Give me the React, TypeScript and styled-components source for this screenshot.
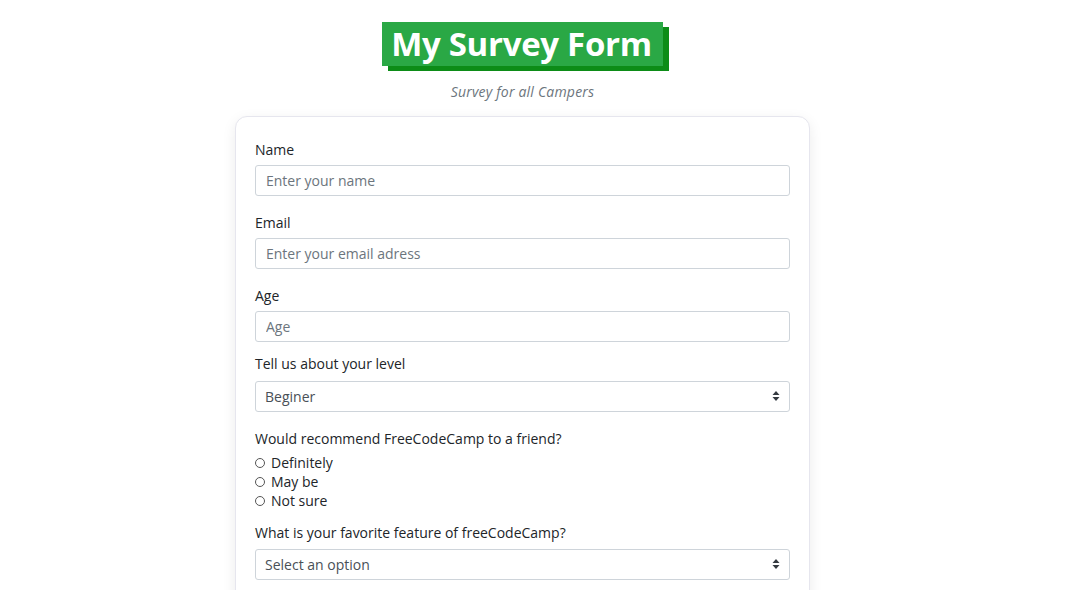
import React from "react";
import styled, { createGlobalStyle } from "styled-components";

const Global = createGlobalStyle`
  html, body { margin: 0; padding: 0; background: #ffffff; }
  body { font-family: "Open Sans", "DejaVu Sans", sans-serif; color: #212529; }
  * { box-sizing: border-box; }
`;

const Page = styled.div`
  width: 1045px;
  display: flex;
  flex-direction: column;
  align-items: center;
  padding-top: 22px;
`;

const Title = styled.h1`
  margin: 0;
  background: #2aa845;
  color: #ffffff;
  font-family: "Open Sans", sans-serif;
  font-weight: 700;
  font-size: 33px;
  line-height: 44px;
  height: 44px;
  padding: 0 11px 0 9px;
  box-shadow: 6px 5px 0 #0c8c17;
  letter-spacing: -0.3px;
`;

const Subtitle = styled.p`
  margin: 17px 0 0;
  font-style: italic;
  font-size: 14px;
  line-height: 18px;
  color: #6c757d;
  letter-spacing: 0.2px;
`;

const Card = styled.form`
  margin-top: 15px;
  width: 575px;
  background: #fff;
  border: 1px solid #e6e6ee;
  border-radius: 12px;
  box-shadow: 0 4px 14px rgba(0, 0, 0, 0.08);
  padding: 23px 19px 30px;
  display: flex;
  flex-direction: column;
`;

const Group = styled.div<{ $gap: number }>`
  display: flex;
  flex-direction: column;
  margin-bottom: ${(p) => p.$gap}px;
`;

const Label = styled.label<{ $mb?: number }>`
  font-size: 14px;
  line-height: 20px;
  margin-bottom: ${(p) => p.$mb ?? 5}px;
  color: #212529;
`;

const Input = styled.input`
  height: 31px;
  width: 100%;
  border: 1px solid #ced4da;
  border-radius: 3px;
  padding: 0 10px;
  font-family: inherit;
  font-size: 14px;
  color: #495057;
  background: #fff;
  &::placeholder { color: #6c757d; }
`;

const SelectWrap = styled.div`
  position: relative;
`;

const Select = styled.select`
  appearance: none;
  -webkit-appearance: none;
  height: 31px;
  width: 100%;
  border: 1px solid #ced4da;
  border-radius: 3px;
  padding: 0 30px 0 9px;
  font-family: inherit;
  font-size: 14px;
  color: #495057;
  background: #fff;
`;

const Arrows = styled.svg`
  position: absolute;
  right: 10px;
  top: 10px;
  width: 8px;
  height: 10px;
  pointer-events: none;
`;

const RadioList = styled.div`
  display: flex;
  flex-direction: column;
`;

const RadioRow = styled.label`
  display: flex;
  align-items: center;
  font-size: 14px;
  line-height: 19px;
  color: #212529;
`;

const Radio = styled.input`
  appearance: none;
  -webkit-appearance: none;
  width: 10px;
  height: 10px;
  margin: 0 6px 0 0;
  border: 1px solid #555;
  border-radius: 50%;
  background: #fff;
`;

function SelectBox({ value, options }: { value: string; options: string[] }) {
  return (
    <SelectWrap>
      <Select defaultValue={value}>
        {options.map((o) => (
          <option key={o}>{o}</option>
        ))}
      </Select>
      <Arrows viewBox="0 0 8 10">
        <path d="M4 0 L7.5 4 H0.5 Z" fill="#343a40" />
        <path d="M4 10 L7.5 6 H0.5 Z" fill="#343a40" />
      </Arrows>
    </SelectWrap>
  );
}

export default function App() {
  return (
    <>
      <Global />
      <Page>
        <Title>My Survey Form</Title>
        <Subtitle>Survey for all Campers</Subtitle>
        <Card onSubmit={(e) => e.preventDefault()}>
          <Group $gap={17}>
            <Label>Name</Label>
            <Input type="text" placeholder="Enter your name" />
          </Group>
          <Group $gap={17}>
            <Label>Email</Label>
            <Input type="email" placeholder="Enter your email adress" />
          </Group>
          <Group $gap={12}>
            <Label>Age</Label>
            <Input type="number" placeholder="Age" />
          </Group>
          <Group $gap={17}>
            <Label $mb={7}>Tell us about your level</Label>
            <SelectBox value="Beginer" options={["Beginer", "Intermediate", "Advanced"]} />
          </Group>
          <Group $gap={13}>
            <Label $mb={4}>Would recommend FreeCodeCamp to a friend?</Label>
            <RadioList>
              <RadioRow>
                <Radio type="radio" name="rec" />
                Definitely
              </RadioRow>
              <RadioRow>
                <Radio type="radio" name="rec" />
                May be
              </RadioRow>
              <RadioRow>
                <Radio type="radio" name="rec" />
                Not sure
              </RadioRow>
            </RadioList>
          </Group>
          <Group $gap={17}>
            <Label $mb={6}>What is your favorite feature of freeCodeCamp?</Label>
            <SelectBox value="Select an option" options={["Select an option", "Challenges", "Projects", "Community", "Open Source"]} />
          </Group>
        </Card>
      </Page>
    </>
  );
}
